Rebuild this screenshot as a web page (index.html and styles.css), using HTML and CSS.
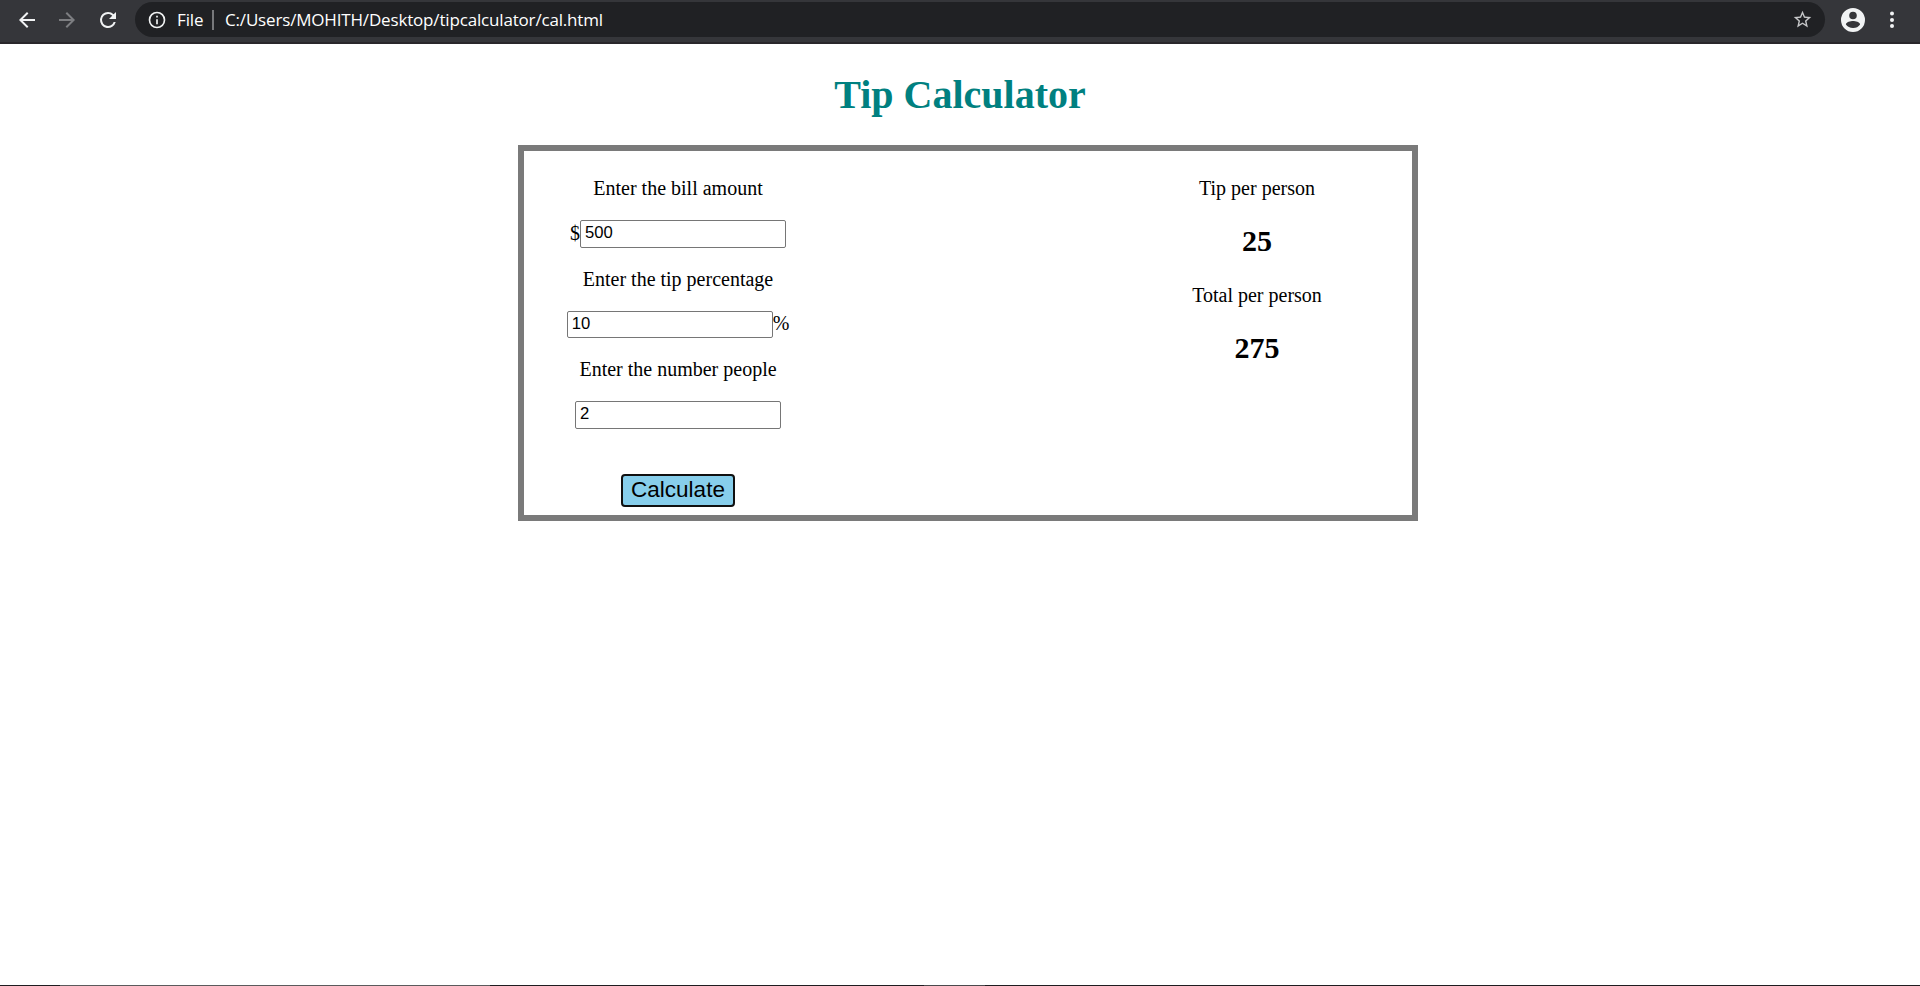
FILE: index.html
```html
<!DOCTYPE html>
<html lang="en">
<head>
<meta charset="utf-8">
<title>Tip Calculator</title>
<link rel="stylesheet" href="styles.css">
</head>
<body>
<header class="toolbar">
  <svg class="nav" viewBox="0 0 24 24"><path d="M20 11H7.83l5.59-5.59L12 4l-8 8 8 8 1.41-1.41L7.83 13H20z"/></svg>
  <svg class="nav nav-off" viewBox="0 0 24 24"><path d="M4 11h12.17l-5.59-5.59L12 4l8 8-8 8-1.41-1.41L16.17 13H4z"/></svg>
  <svg class="nav reload" viewBox="0 0 24 24"><path d="M17.65 6.35A7.96 7.96 0 0 0 12 4a8 8 0 1 0 7.73 10h-2.08A6 6 0 1 1 12 6c1.66 0 3.14.69 4.22 1.78L13 11h7V4z"/></svg>
  <div class="address">
    <svg class="info" viewBox="0 0 24 24"><path d="M11 17h2v-6h-2zm1-15a10 10 0 1 0 0 20 10 10 0 0 0 0-20zm0 18a8 8 0 1 1 0-16 8 8 0 0 1 0 16zM11 9h2V7h-2z"/></svg>
    <span class="scheme">File</span>
    <span class="divider"></span>
    <span class="url">C:/Users/MOHITH/Desktop/tipcalculator/cal.html</span>
    <svg class="star" viewBox="0 0 24 24"><path d="M22 9.24l-7.19-.62L12 2 9.19 8.63 2 9.24l5.46 4.73L5.82 21 12 17.27 18.18 21l-1.63-7.03zM12 15.4l-3.76 2.27 1-4.28-3.32-2.88 4.38-.38L12 6.1l1.71 4.04 4.38.38-3.32 2.88 1 4.28z"/></svg>
  </div>
  <svg class="profile" viewBox="0 0 24 24"><path fill-rule="evenodd" d="M12 0a12 12 0 1 0 0 24 12 12 0 0 0 0-24zm0 3.7a3.8 3.8 0 1 1 0 7.6 3.8 3.8 0 0 1 0-7.6zm0 16.3c-3 0-5.600-1.300-7.100-3.500.1-2.300 4.700-3.400 7.100-3.400s7 1.100 7.100 3.400A8.500 8.500 0 0 1 12 20z"/></svg>
  <svg class="dots" viewBox="0 0 6 18"><circle cx="3" cy="2.500" r="2"/><circle cx="3" cy="9" r="2"/><circle cx="3" cy="15" r="2"/></svg>
</header>
<main class="page">
  <h1 class="title">Tip Calculator</h1>
  <section class="box">
    <div class="column">
      <p class="label">Enter the bill amount</p>
      <div class="field"><span>$</span><input class="entry" type="text" value="500"></div>
      <p class="label">Enter the tip percentage</p>
      <div class="field field-short"><input class="entry" type="text" value="10"><span>%</span></div>
      <p class="label">Enter the number people</p>
      <div class="field"><input class="entry" type="text" value="2"></div>
      <button class="calculate">Calculate</button>
    </div>
    <div class="column results">
      <p class="label">Tip per person</p>
      <h2 class="amount">25</h2>
      <p class="label">Total per person</p>
      <h2 class="amount">275</h2>
    </div>
  </section>
</main>
<footer class="edge"><span class="edge-start"></span><span class="edge-search"></span><span class="edge-gap"></span><span class="edge-app"></span></footer>
</body>
</html>
```
FILE: styles.css
```css
* { box-sizing: border-box; }
body {
  margin: 0;
  height: 100vh;
  display: flex;
  flex-direction: column;
  overflow: hidden;
  background: #fff;
  color: #000;
  font-family: "Liberation Serif", serif;
  font-size: 20px;
}
.toolbar {
  height: 44px;
  flex: none;
  display: flex;
  align-items: center;
  padding: 0 0 3px 15px;
  background: #35363a;
  border-bottom: 2px solid #29272b;
}
.toolbar svg { flex: none; fill: #f1f3f4; }
.nav { width: 24px; height: 24px; margin-right: 16px; }
.toolbar .nav-off { fill: #7d7e81; margin-right: 17px; }
.toolbar .reload { margin-right: 15px; }
.address {
  width: 1690px;
  height: 35px;
  display: flex;
  align-items: center;
  padding-left: 12px;
  border-radius: 18px;
  background: #202124;
  color: #fff;
  font-family: "Open Sans", "Noto Sans", sans-serif;
  font-size: 17px;
}
.info { width: 20px; height: 20px; }
.scheme { width: 35px; margin-left: 10px; letter-spacing: -0.1px; }
.divider { width: 2px; height: 20px; background: #77787b; }
.url { margin-left: 11px; letter-spacing: -0.17px; }
.toolbar .star { width: 21px; height: 21px; margin-left: auto; margin-right: 12px; fill: #c6c7c9; }
.profile { width: 24px; height: 24px; margin-left: 16px; }
.dots { width: 6px; height: 18px; margin-left: 24px; }
.page { flex: 1; padding-top: 28px; }
.title {
  margin: 0 0 27px;
  color: #008080;
  font-size: 40px;
  line-height: 46px;
  text-align: center;
}
.box {
  width: 900px;
  height: 376px;
  margin-left: 518px;
  padding-top: 26px;
  display: flex;
  justify-content: space-between;
  border: 6px solid #7a7a7a;
}
.column {
  width: 308px;
  display: flex;
  flex-direction: column;
  align-items: center;
}
.results { width: 310px; }
.label { margin: 0; line-height: 23px; }
.field {
  height: 28px;
  margin: 20px 0;
  display: flex;
  align-items: center;
  line-height: 23px;
}
.field span { padding-bottom: 2px; }
.field-short { height: 27px; }
.entry {
  width: 206px;
  height: 100%;
  padding: 0 4px 2px;
  border: 1px solid #767676;
  border-radius: 2px;
  font-family: "Liberation Sans", sans-serif;
  font-size: 16.67px;
}
.calculate {
  width: 114px;
  height: 33px;
  margin-top: 25px;
  padding: 0 0 2px;
  border: 2px solid #101010;
  border-radius: 4px;
  background: #87ceeb;
  color: #000;
  font-family: "Liberation Sans", sans-serif;
  font-size: 22.5px;
  line-height: 26px;
}
.amount { margin: 24px 0 26px; font-size: 30px; line-height: 34px; }
.edge { height: 1px; flex: none; display: flex; background: #1f1c20; }
.edge-start { width: 60px; }
.edge-search { width: 430px; background: #5b5a5c; }
.edge-gap { width: 434px; }
.edge-app { width: 61px; background: #4b494c; }
```
